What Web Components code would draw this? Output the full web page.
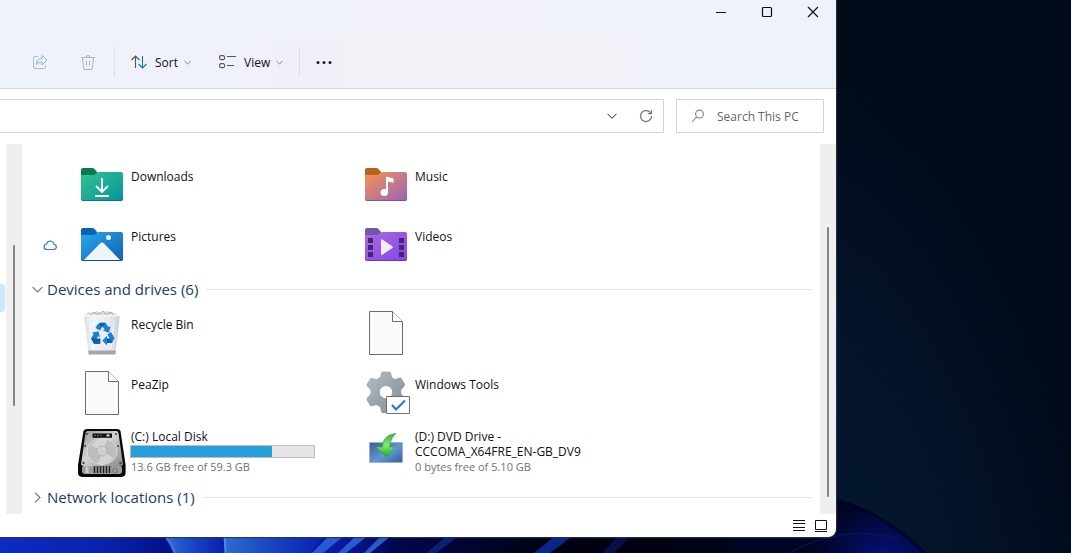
<!DOCTYPE html>
<html lang="en">
<head>
<meta charset="utf-8">
<title>This PC</title>
<style>
html, body { margin: 0; height: 100%; }
body { font: 12px/15px "Open Sans", "Noto Sans", sans-serif; color: #111; background: #020c1e; }
</style>
</head>
<body>
<desktop-shell>
  <explorer-window>
    <title-bar slot="top"></title-bar>
    <command-bar slot="top"></command-bar>
    <address-row slot="top"></address-row>
    <item-group>
      <file-item icon="downloads">Downloads</file-item>
      <file-item icon="music">Music</file-item>
      <file-item icon="pictures" cloud>Pictures</file-item>
      <file-item icon="videos">Videos</file-item>
    </item-group>
    <item-group heading="Devices and drives (6)" open>
      <file-item icon="bin">Recycle Bin</file-item>
      <file-item icon="file"></file-item>
      <file-item icon="file">PeaZip</file-item>
      <file-item icon="tools">Windows Tools</file-item>
      <file-item icon="disk" used="77" detail="13.6 GB free of 59.3 GB">(C:) Local Disk</file-item>
      <file-item icon="dvd" detail="0 bytes free of 5.10 GB">(D:) DVD Drive - CCCOMA_X64FRE_EN-GB_DV9</file-item>
    </item-group>
    <item-group heading="Network locations (1)"></item-group>
    <status-bar slot="bottom"></status-bar>
  </explorer-window>
</desktop-shell>

<script>
const chevron = (color, w = 7) => `<svg width="${w}" height="${w}" viewBox="0 0 10 10" fill="none" stroke="${color}" stroke-width="1.1" aria-hidden="true"><path d="M.6 2.8 5 7.2l4.4-4.4"/></svg>`;

const folder = (tab, from, to, edge, art) => `
  <defs><linearGradient id="g" x1="0" y1="0" x2="1" y2="1"><stop stop-color="${from}"/><stop offset="1" stop-color="${to}"/></linearGradient></defs>
  <path fill="${tab}" d="M3 17V9q0-2 2-2h9q1.500 0 2.500 1l2.500 3v6z"/>
  <path fill="url(#g)" d="M3 14h12q1.500 0 2.500-1l1.500-1.400q.8-.6 2-.6h22q2 0 2 2v25q0 2-2 2H5q-2 0-2-2z"/>
  <path fill="none" stroke="${edge}" stroke-width="1" opacity=".7" d="M3.500 38q0 1.500 1.500 1.500h38q1.500 0 1.500-1.500"/>${art}`;

const icons = {
  downloads: folder('#0b7a4c', '#31c491', '#05939c', '#08666c', '<path d="M24 17v14m-6-6 6 6 6-6M17 35h14" fill="none" stroke="#fff" stroke-width="1.800"/>'),
  pictures: folder('#0863b8', '#2aa6ee', '#1061b5', '#0b4380', '<path d="M6 39 22 22.500q2-2 4 0L42 39z" fill="#eef5fc"/><circle cx="30.500" cy="16.500" r="2.500" fill="#eef7ff"/>'),
  music: folder('#b7611a', '#f69452', '#9a63b5', '#7d4a62', '<ellipse cx="22.300" cy="31.500" rx="3.700" ry="3.500" fill="#fff"/><path d="M24 32V15.500l7.500 2v4.300l-5.500-1.400V32z" fill="#fff"/>'),
  videos: folder('#7656ad', '#a86be0', '#8445e8', '#57309a', '<path d="M6 17h5v5H6zm0 7h5v5H6zm0 7h5v5H6zm31-14h5v5h-5zm0 7h5v5h-5zm0 7h5v5h-5z" fill="#472276"/><path d="M19 19v14q0 1.500 1.300.7l10-6.700q1-.9 0-1.800l-10-6.700Q19 17.700 19 19z" fill="#f3edfb"/>'),
  file: '<path d="M7.500 2.500h23l10 10v33h-33z" fill="#fafafa" stroke="#6b6b6b"/><path d="M30.500 2.500v10h10" fill="#fff" stroke="#6b6b6b"/>',
  bin: `<defs><linearGradient id="g"><stop stop-color="#d9dde2"/><stop offset=".25" stop-color="#f2f3f6"/><stop offset=".7" stop-color="#e7eaee"/><stop offset="1" stop-color="#ccd1d7"/></linearGradient></defs>
    <path d="m8 6 2-3 5 1 4-2 5 2 4-2 5 1 4 1 3 2-2 3H9z" fill="#d6d9db"/><path d="m12 6 4-3 4 3 5-4 3 4 5-3 3 4" fill="none" stroke="#a6abae"/>
    <path d="M6 6.500h36L37.500 45h-27z" fill="url(#g)"/><path d="M6 6.500h36" stroke="#f7f8fa" stroke-width="1.500"/>
    <path d="M10.200 41.500h27.600l-.5 4h-26.600z" fill="#a4a6a9"/><path d="m12 12 3 28m21-28-3 28" stroke="#fff" opacity=".7"/>
    <g fill="#1683d8"><path d="m19 16 3-2.200h5.500l3 4.200 2.200-.8-1.700 6.500-6.200-2.200 2-1-2.300-3-2.500 4-4.500-2.500z"/><path d="m33 23 3.500 6-2.500 5h-5v2.500l-4.700-5 4.700-4.700v2.500h2.700l-2.300-3.800z"/><path d="m14 23.500 6.500-1.200 1.500 6.200-2-1.200-1.500 2.500h4v5h-6.500l-3-5.300 2.500-4.500z"/></g>
    <path d="m22 13.800 5.500.1-2.800 3.600-3.500-.2zM13 29.500h5.500l3.500.3v5h-6zM34 34h-5v-4h3.500z" fill="#0861ad"/>`,
  tools: `<defs><linearGradient id="g" x2="1" y2="1"><stop stop-color="#b4bbc3"/><stop offset="1" stop-color="#818b95"/></linearGradient></defs>
    <path fill="url(#g)" fill-rule="evenodd" d="M19 4q.4-1.500 2-1.500h6q1.600 0 2 1.500l1 4.300 3 1.700 4.500-1.300q1.500-.4 2.300 1l3 5q.8 1.500-.4 2.600L39.200 21v4l3.200 3.500q1.200 1.200.4 2.500l-3 5q-.8 1.400-2.300 1L33 36l-3 2-1 4.300q-.4 1.700-2 1.700h-6q-1.600 0-2-1.500L18 38l-3.500-2-4.500 1.200q-1.500.4-2.300-1l-3-5q-.8-1.300.4-2.500L8.500 25v-4l-3.300-3.600Q4 16.300 4.800 15l3-5q.8-1.400 2.300-1l4.400 1.200L18 8zM24 17a6.200 6.200 0 1 0 0 12.400A6.200 6.200 0 0 0 24 17z"/>
    <path d="M24.500 27.500h23v17h-23z" fill="#fcfcfc" stroke="#717171"/><path d="m30 36 4 4.500 9-9" fill="none" stroke="#137ec9" stroke-width="2"/>`,
  disk: `<defs><linearGradient id="g" x2="1" y2="1"><stop stop-color="#999"/><stop offset=".45" stop-color="#d2d3d4"/><stop offset="1" stop-color="#858789"/></linearGradient></defs>
    <path d="M5.500 2Q6.500 0 9 0h30q2.500 0 3.500 2l5.100 34v8q0 4-5 4H5q-5 0-5-4v-8z" fill="#080808"/>
    <path d="M9 2h30l1.500 2L45 35.500 42 38H6l-3-2.500L7.500 4z" fill="url(#g)"/>
    <ellipse cx="24" cy="22.500" rx="15" ry="13" fill="#bbbdbf" stroke="#dcdcdc"/><path d="M13 16q9-9 17-6L24 22zM35 29q-6 8-15 6l4-13z" fill="#e2e2e3" opacity=".6"/><circle cx="24" cy="22" r="5" fill="#cfd0d1" stroke="#b4b6b8"/>
    <path d="M14.500 4.500h19.500v4.300H14.500z" fill="#111"/><path d="M16 6.500h9" stroke="#666" stroke-dasharray="2 1"/><path d="M28.500 5.500h3v2h-3z" fill="#ddd"/>
    <path d="M4 37.500h40v6l-2 1.500H6l-2-1.500z" fill="#9a9c9e"/><path d="M9 38v6" stroke="#ccc" stroke-width="3"/><path d="M16.500 37v7m3-7v7m3-7v7m3-7v7m3-7v7m3-7v7" stroke="#222" stroke-width="1.500"/><path d="M35 40h4v3h-4z" fill="#bbb" stroke="#666"/>
    <g fill="#444"><circle cx="9" cy="5" r="1"/><circle cx="38" cy="5" r="1"/><circle cx="7" cy="17" r="1"/><circle cx="40" cy="17" r="1"/><circle cx="5.500" cy="34" r="1.200"/><circle cx="42.500" cy="34" r="1.200"/></g>`,
  dvd: `<defs><linearGradient id="g" x2="1" y2="1"><stop stop-color="#315f9c"/><stop offset=".55" stop-color="#6595d4"/><stop offset="1" stop-color="#2e5da4"/></linearGradient><linearGradient id="h" x2="0" y2="1"><stop stop-color="#3cae40"/><stop offset=".5" stop-color="#84e970"/><stop offset="1" stop-color="#18aa28"/></linearGradient></defs>
    <path d="M7.500 13.500h33v20h-33z" fill="url(#g)" stroke="#a5b2c2"/><path d="M34 4.500q-5 3.500-6.500 13.500H33l-8.500 10L14 18h6.500Q20.500 6 34 4.500z" fill="url(#h)" stroke="#31a83a" stroke-width=".7"/>`
};

/* Registers a custom element whose shadow root is filled from a template. */
function define(name, css, markup) {
  customElements.define(name, class extends HTMLElement {
    constructor() {
      super();
      this.attachShadow({ mode: 'open' });
    }
    connectedCallback() {
      if (this.shadowRoot.firstChild) return;
      const t = document.createElement('template');
      t.innerHTML = `<style>*{box-sizing:border-box}svg{display:block;flex:none}button{font:inherit;color:inherit;background:none;border:0;padding:0;margin:0}${css}</style>${typeof markup === 'function' ? markup(this) : markup}`;
      this.shadowRoot.append(t.content.cloneNode(true));
    }
  });
}

define('desktop-shell', `
  :host { display: flex; min-height: 100vh; box-sizing: border-box; padding: 0 235px 16px 0; position: relative; overflow: hidden; }
  .wall { position: absolute; inset: 0; width: 100%; height: 100%; }
  ::slotted(*) { flex: 1; position: relative; }`,
  `<svg class="wall" viewBox="0 0 1071 553" preserveAspectRatio="xMinYMax slice" aria-hidden="true">
    <defs>
      <radialGradient id="night" gradientUnits="userSpaceOnUse" cx="0" cy="0" r="1" gradientTransform="translate(860 530) rotate(-15) scale(240 540)"><stop stop-color="#04172f"/><stop offset=".5" stop-color="#031127"/><stop offset="1" stop-color="#010a18"/></radialGradient>
      <linearGradient id="band"><stop stop-color="#0d2cc4"/><stop offset=".12" stop-color="#0a22ad"/><stop offset=".2" stop-color="#03128a"/><stop offset=".32" stop-color="#0a1fae"/><stop offset=".4" stop-color="#0a1bab"/><stop offset=".47" stop-color="#020750"/><stop offset=".55" stop-color="#010434"/><stop offset=".66" stop-color="#00020f"/><stop offset="1" stop-color="#00031c"/></linearGradient>
      <linearGradient id="petal"><stop stop-color="#2f6cce"/><stop offset=".5" stop-color="#1743c2"/><stop offset="1" stop-color="#0a1fae"/></linearGradient>
      <radialGradient id="bloom" gradientUnits="userSpaceOnUse" cx="885" cy="570" r="75"><stop stop-color="#05148c"/><stop offset=".45" stop-color="#030c56"/><stop offset="1" stop-color="#010420"/></radialGradient>
    </defs>
    <path fill="url(#night)" d="M0 0h1071v553H0z"/>
    <path fill="url(#band)" d="M0 530h836v23H0z"/>
    <path fill="url(#petal)" d="M165 535q7 9 10 18h49V535z"/><path fill="url(#petal)" d="M224 535h100l-14 18h-85z"/>
    <path d="M165 535q7 9 10 18" fill="none" stroke="#3975c9" stroke-width="3"/><path d="M224.500 535l1 18" stroke="#5188df" stroke-width="2"/>
    <path fill="#285ad0" d="M330 535h15l-22 18h-11zm27 0h12l-23 18h-8zm25 0h10l-22 18h-6z"/>
    <path fill="#0b2070" d="M448 535h12l-24 18h-10z"/><path fill="#0b2689" d="M556 535h18l-24 18h-16z"/>
    <path fill="#06104a" d="M618 535h14l-18 18h-11z"/>
    <path fill="url(#bloom)" d="M720 553q50-56 116-54 50 13 90 54z"/>
    <path fill="none" stroke="#091a78" stroke-width="2" opacity=".5" d="M790 553q50-30 110-14"/><path fill="none" stroke="#01041c" stroke-width="3" opacity=".7" d="M836 500q48 13 90 54"/>
  </svg><slot></slot>`);

define('explorer-window', `
  :host { display: flex; flex-direction: column; background: #fff; border-radius: 0 0 8px 0; overflow: hidden; box-shadow: 0 0 1px 1px #263348; min-width: 0; }
  .body { flex: 1; display: grid; grid-template-columns: 6px 16px minmax(0, 1fr) 16px; }
  .nav { padding-top: 140px; }
  .nav div { width: 5px; height: 28px; background: #cce8ff; border-radius: 0 3px 3px 0; }
  .track { background: #efefef; display: flex; justify-content: center; }
  .track div { width: 2px; border-radius: 1px; background: #858585; }
  .left div { height: 161px; margin-top: 101px; }
  .right div { height: 270px; margin-top: 83px; }
  main { padding: 11px 8px 0 10px; }`,
  `<slot name="top"></slot>
   <div class="body"><div class="nav"><div></div></div><div class="track left"><div></div></div>
   <main><slot></slot></main><div class="track right"><div></div></div></div>
   <slot name="bottom"></slot>`);

define('title-bar', `
  :host { display: flex; justify-content: flex-end; height: 36px; background: linear-gradient(90deg, #eef2fb, #f1f2f9 50%, #f0f3f9 75%, #edf2fb); }
  button { width: 46px; height: 24px; display: grid; place-items: center; }`,
  `<button aria-label="Minimize"><svg width="12" height="12" fill="none" stroke="#111"><path d="M1 6.500h10"/></svg></button>
   <button aria-label="Maximize"><svg width="12" height="12" fill="none" stroke="#111" stroke-width="1.200"><rect x="1.500" y="1.500" width="9" height="9" rx="1"/></svg></button>
   <button aria-label="Close"><svg width="12" height="12" fill="none" stroke="#111" stroke-width="1.200"><path d="m1 1 10 10M11 1 1 11"/></svg></button>`);

define('command-bar', `
  :host { display: flex; align-items: center; height: 53px; box-sizing: border-box; padding-left: 24px; gap: 8px; border-bottom: 1px solid #d9dadd; background: linear-gradient(90deg, #eef2fb, #f1f1f7 50%, #f1f2f8 70%, #edf2fb); }
  button { display: flex; align-items: center; gap: 6px; height: 32px; padding: 0 8px; }
  button svg:first-child { margin-right: 2px; }
  .icon { margin-right: 8px; }
  .icon + .icon { margin-right: 2px; }
  .icon svg:first-child, .more svg:first-child { margin: 0; }
  i { width: 1px; height: 30px; background: #dcdfe6; }
  .sort { margin-right: 4px; }`,
  `<button class="icon" aria-label="Share"><svg width="16" height="16" fill="none" stroke="#b5bac4"><path d="M6 2.500H3Q1.500 2.500 1.500 4v9q0 1.500 1.500 1.500h9q1.500 0 1.500-1.500v-2"/><path stroke="#86b5e0" d="M10 1.500v3C6 4.500 4.500 7 4.500 10.500 6 8.500 7.500 8 10 8v3l5-4.800z"/></svg></button>
   <button class="icon" aria-label="Delete"><svg width="16" height="16" fill="none" stroke="#adb1b8"><path d="M1 3.500h14M6 3.500q0-2 2-2t2 2M2.500 3.500l1 10.500q.2 1.500 1.500 1.500h6q1.300 0 1.500-1.500l1-10.500M6.500 6.500v5m3-5v5"/></svg></button>
   <i></i>
   <button class="sort"><svg width="16" height="16" fill="none" stroke="#555" stroke-width="1.100"><path d="M4.500 14V2M.5 6l4-4 4 4"/><path stroke="#1475bd" d="M11.500 2v12m-4-4 4 4 4-4"/></svg>Sort ${chevron('#666')}</button>
   <button><svg width="17" height="16" fill="none" stroke="#555" stroke-width="1.100"><rect x=".6" y="1.600" width="5" height="4" rx="1.500"/><rect x=".6" y="9.600" width="5" height="4" rx="1.500"/><path d="M8 2.500h9M8 11.500h7"/></svg>View ${chevron('#666')}</button>
   <i></i>
   <button class="more" aria-label="See more"><svg width="16" height="16" fill="#222"><circle cx="2" cy="8.500" r="1.500"/><circle cx="8" cy="8.500" r="1.500"/><circle cx="14" cy="8.500" r="1.500"/></svg></button>`);

define('address-row', `
  :host { display: flex; gap: 12px; padding: 10px 12px 11px 0; }
  .box { display: flex; align-items: center; height: 34px; border: 1px solid #d4d4d4; background: #fff; }
  .path { flex: 1; border-left: 0; min-width: 0; }
  input { font: inherit; border: 0; outline: 0; background: none; padding: 0; min-width: 0; flex: 1; }
  input::placeholder { color: #666; opacity: 1; }
  .path button { width: 34px; height: 32px; display: grid; place-items: center; }
  .search { width: 148px; padding-left: 14px; gap: 12px; }`,
  `<div class="box path"><input type="text" aria-label="Address"><button aria-label="Previous locations">${chevron('#666', 10)}</button>
   <button aria-label="Refresh"><svg width="14" height="14" fill="none" stroke="#777" stroke-width="1.200"><path d="M12.500 7A5.500 5.500 0 1 1 10.500 2.800L12 4.500M12.500 1v3.700H8.700"/></svg></button></div>
   <label class="box search"><svg width="14" height="14" fill="none" stroke="#888" stroke-width="1.100"><circle cx="8.500" cy="5" r="3.900"/><path d="M5.800 7.800 1 13"/></svg><input type="search" aria-label="Search" placeholder="Search This PC"></label>`);

define('item-group', `
  :host { display: block; }
  h2 { margin: 0; font: 15px/20px "Open Sans", "Noto Sans", sans-serif; display: flex; align-items: center; height: 28px; gap: 8px; color: #26397a; }
  h2::after { content: ""; flex: 1; height: 1px; background: #e3e3e3; }
  button { display: flex; align-items: center; gap: 4px; }
  svg { transform: rotate(-90deg); }
  :host([open]) svg { transform: none; }
  .items { display: grid; grid-template-columns: repeat(auto-fill, 284px); }`,
  el => (el.hasAttribute('heading') ? `<h2><button aria-expanded="${el.hasAttribute('open')}">${chevron('#777', 11)}${el.getAttribute('heading')}</button></h2>` : '') +
    `<div class="items"><slot></slot></div>`);

define('file-item', `
  :host { display: grid; grid-template-columns: 36px 48px 190px; height: 60px; padding-left: 10px; box-sizing: border-box; }
  .state, .pic { align-self: center; }
  .text { padding: 14px 0 0 5px; }
  :host([detail]) .text { padding-top: 6px; }
  .detail { color: #707070; font-size: 11px; }
  progress { appearance: none; display: block; width: 185px; height: 13px; margin: 1px 0 1px -1px; border: 1px solid #bcbcbc; background: #e6e6e6; }
  progress::-webkit-progress-bar { background: #e6e6e6; }
  progress::-webkit-progress-value { background: #26a0da; }`,
  el => {
    const used = el.getAttribute('used'), detail = el.getAttribute('detail');
    return `<div class="state">${el.hasAttribute('cloud') ? '<svg width="16" height="14" viewBox="0 0 16 14" fill="#f4faff" stroke="#3380b8" stroke-width="1.200"><path d="M5 11.500h6.500a2.500 2.500 0 0 0 .6-5C11.700 4 10 3 8.200 3 6.200 3 5 4.300 4.700 6a2.700 2.700 0 0 0 .3 5.500z"/></svg>' : ''}</div>
      <svg class="pic" width="48" height="48" viewBox="0 0 48 48" aria-hidden="true">${icons[el.getAttribute('icon')]}</svg>
      <div class="text"><slot></slot>${used ? `<progress aria-label="Space used" max="100" value="${used}"></progress>` : ''}${detail ? `<div class="detail">${detail}</div>` : ''}</div>`;
  });

define('status-bar', `
  :host { display: flex; justify-content: flex-end; align-items: center; height: 23px; gap: 8px; padding-right: 8px; }`,
  `<button aria-label="Details view"><svg width="14" height="14" stroke="#111" aria-hidden="true"><path d="M1 1.500h12M1 4.500h12M1 8.500h12M1 11.500h12"/></svg></button>
   <button aria-label="Large icons view"><svg width="14" height="14" fill="none" stroke="#111" aria-hidden="true"><path d="M1.500 1.500h11v9h-11zM1 12.500h12"/></svg></button>`);
</script>
</body>
</html>
